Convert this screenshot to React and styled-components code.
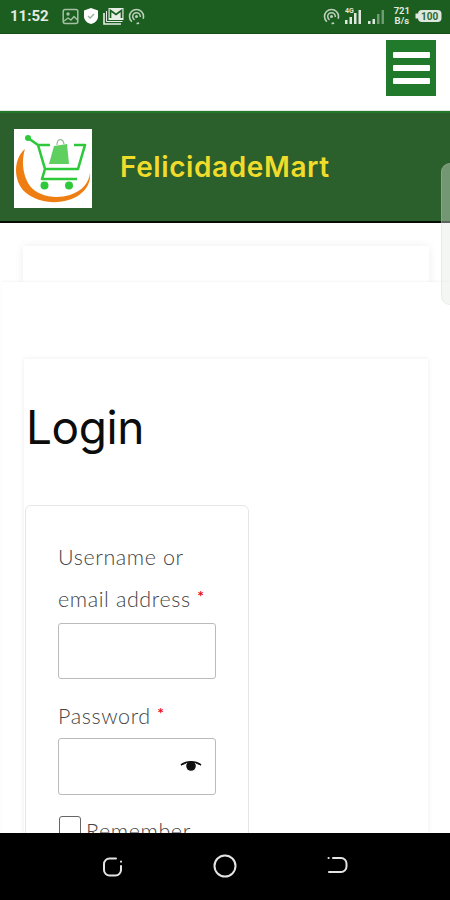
import React from 'react';
import styled, { createGlobalStyle } from 'styled-components';

const Global = createGlobalStyle`
  html, body {
    margin: 0;
    padding: 0;
    background: #fff;
  }
  * { box-sizing: border-box; }
`;

const Screen = styled.div`
  position: relative;
  width: 450px;
  height: 900px;
  overflow: hidden;
  background: #fff;
  font-family: Lato, "Open Sans", sans-serif;
`;

const StatusBar = styled.div`
  height: 34px;
  background: #1b5e20;
  border-bottom: 1px solid #14501a;
  display: flex;
  align-items: center;
  justify-content: space-between;
  padding: 0 8px 1px 10px;
  color: #fff;
`;

const StatusGroup = styled.div`
  display: flex;
  align-items: center;
  gap: ${p => p.$gap || 4}px;
`;

const Clock = styled.span`
  font: 700 15px Roboto, sans-serif;
  color: #e3ebe3;
  margin-right: 9px;
`;

const Speed = styled.span`
  font: 700 9.5px/10px Roboto, sans-serif;
  color: #dfe8df;
  text-align: center;
  margin: 0 4px 0 7px;
`;

const TopBar = styled.div`
  height: 77px;
  display: flex;
  justify-content: flex-end;
  padding: 6px 14px 0 0;
  background: #fff;
  border-bottom: 1px solid #e8e8e4;
`;

const MenuButton = styled.div`
  width: 50px;
  height: 56px;
  background: #217a2b;
  display: flex;
  flex-direction: column;
  align-items: center;
  justify-content: center;
  gap: 7px;
`;

const MenuBar = styled.span`
  width: 37px;
  height: 6px;
  border-radius: 1px;
  background: #fff;
`;

const Banner = styled.div`
  height: 112px;
  background: #2b5f2b;
  border-top: 2px solid #217a2b;
  border-bottom: 2px solid #060d06;
  display: flex;
  align-items: center;
  padding: 2px 0 0 14px;
`;

const LogoBox = styled.div`
  width: 78px;
  height: 79px;
  background: #fff;
  display: flex;
`;

const BrandName = styled.div`
  margin: 0 0 2px 28px;
  font: 600 28px Inter, "Open Sans", sans-serif;
  letter-spacing: 0.6px;
  color: #f0dc2a;
`;

const Content = styled.div`
  padding-top: 23px;
  background: #fff;
`;

const GhostCard = styled.div`
  height: 60px;
  margin: 0 21px 0 23px;
  background: #fff;
  box-shadow: 0 0 9px rgba(0, 0, 0, 0.07);
`;

const Sheet = styled.div`
  position: relative;
  margin: -24px 0 0 2px;
  padding-top: 77px;
  background: #fff;
  box-shadow: 0 -1px 3px rgba(0, 0, 0, 0.04);
`;

const InnerCard = styled.div`
  margin: 0 22px;
  padding: 1px 2px 0;
  background: #fff;
  box-shadow: 0 0 5px rgba(0, 0, 0, 0.08);
`;

const Heading = styled.h1`
  margin: 38px 0 49px;
  font: 400 46px/58px Inter, "Open Sans", sans-serif;
  letter-spacing: -0.4px;
  color: #0c0c0c;
`;

const FormCard = styled.form`
  width: 224px;
  margin-left: -1px;
  padding: 30px 32px 40px 32px;
  background: #fff;
  border: 1px solid #e6e6e6;
  border-radius: 6px;
`;

const Label = styled.label`
  display: block;
  margin-bottom: ${p => p.$mb}px;
  font: 300 21.5px/42px Lato, "Open Sans", sans-serif;
  letter-spacing: 0.6px;
  color: #444;
`;

const Required = styled.span`
  color: #e8101c;
  font-size: 16px;
  line-height: 0;
  font-weight: 700;
  vertical-align: 5px;
`;

const InputWrap = styled.div`
  position: relative;
  margin-bottom: ${p => p.$mb}px;
`;

const Input = styled.input`
  display: block;
  width: 158px;
  height: ${p => p.$h}px;
  background: #fff;
  border: 1px solid #bbb;
  border-radius: 3px;
  outline: none;
`;

const EyeIcon = styled.svg`
  position: absolute;
  right: 14px;
  top: 21px;
`;

const RememberRow = styled.div`
  display: flex;
  align-items: flex-start;
  margin-left: 1px;
`;

const Checkbox = styled.span`
  flex: none;
  width: 22px;
  height: 22px;
  border: 1px solid #666;
  border-radius: 3px;
  background: #fff;
`;

const RememberText = styled.span`
  margin-left: 5px;
  font: 300 21.5px/30px Lato, "Open Sans", sans-serif;
  letter-spacing: 0.6px;
  color: #444;
`;

const EdgeHandle = styled.div`
  position: absolute;
  top: 163px;
  right: 0;
  width: 9px;
  height: 142px;
  border-radius: 10px 0 0 10px;
  background: rgba(225, 232, 225, 0.4);
  border: 1px solid rgba(200, 205, 200, 0.25);
  border-right: none;
`;

const NavBar = styled.div`
  position: absolute;
  left: 0;
  right: 0;
  bottom: 0;
  height: 67px;
  background: #000;
  display: flex;
  align-items: center;
  justify-content: space-between;
  padding: 0 100px 2px 100px;
`;

const SmallIcon = ({ w = 18, h = 18, children }) => (
  <svg width={w} height={h} viewBox={`0 0 ${w} ${h}`} fill="none">{children}</svg>
);

const Arcs = () => (
  <SmallIcon w={17} h={17}>
    <circle cx="8.5" cy="8.5" r="7" stroke="#bcd0bc" strokeWidth="1.6" strokeDasharray="30 6" strokeDashoffset="-5" transform="rotate(90 8.5 8.5)" />
    <circle cx="8.5" cy="8.5" r="3.8" stroke="#bcd0bc" strokeWidth="1.5" strokeDasharray="16 8" strokeDashoffset="-2" transform="rotate(90 8.5 8.5)" />
    <circle cx="8.5" cy="8.5" r="1.5" fill="#bcd0bc" />
  </SmallIcon>
);

const StatusLeft = () => (
  <StatusGroup>
    <Clock>11:52</Clock>
    <SmallIcon w={17} h={17}>
      <rect x="1.2" y="1.5" width="14.6" height="14" rx="2" stroke="#a6c0a6" strokeWidth="1.5" />
      <circle cx="6" cy="6" r="1.7" fill="#a6c0a6" />
      <path d="M2 13l4-3 3 2 3-3.5 3.5 3.5" stroke="#a6c0a6" strokeWidth="1.4" />
    </SmallIcon>
    <SmallIcon w={16} h={18}>
      <path d="M8 1l7 2.5v6c0 3.8-3 6.4-7 7.5-4-1.1-7-3.7-7-7.5v-6z" fill="#fff" />
      <path d="M5 9l2.2 2L11 7" stroke="#9ab09a" strokeWidth="1.4" />
    </SmallIcon>
    <SmallIcon w={21} h={18}>
      <rect x="5.5" y="1" width="15" height="12" fill="#e6eee6" />
      <path d="M7.5 11V3.5l5.5 4 5.5-4V11" stroke="#1b5e20" strokeWidth="1.7" />
      <path d="M1 6v11h17" stroke="#e6eee6" strokeWidth="1.6" />
      <path d="M3.500 4v10.500h16" stroke="#e6eee6" strokeWidth="1" />
    </SmallIcon>
    <Arcs />
  </StatusGroup>
);

const StatusRight = () => (
  <StatusGroup $gap={1}>
    <Arcs />
    <SmallIcon w={24} h={20}>
      <text x="4" y="7" fontSize="7" fontWeight="700" fill="#dfe8df" fontFamily="Roboto, sans-serif">4G</text>
      <rect x="4" y="14" width="2.500" height="4" fill="#dfe8df" />
      <rect x="8.500" y="11" width="2.500" height="7" fill="#dfe8df" />
      <rect x="13" y="7" width="2.500" height="11" fill="#dfe8df" />
      <rect x="17.500" y="4" width="2.500" height="14" fill="#dfe8df" />
    </SmallIcon>
    <SmallIcon w={20} h={20}>
      <rect x="2" y="15" width="2.500" height="3" fill="#dfe8df" />
      <rect x="6.500" y="13" width="2.500" height="5" fill="#dfe8df" />
      <rect x="11" y="8" width="2.500" height="10" fill="#6f9a72" />
      <rect x="15.500" y="4" width="2.500" height="14" fill="#6f9a72" />
    </SmallIcon>
    <Speed>721<br />B/s</Speed>
    <SmallIcon w={27} h={14}>
      <rect x="0.500" y="4.500" width="2.500" height="5" fill="#dfe8df" />
      <rect x="3" y="1" width="23.500" height="12" rx="4" fill="#dfe8df" />
      <text x="14.700" y="10.500" textAnchor="middle" fontSize="10" fontWeight="700" fill="#2b6b30" fontFamily="Roboto, sans-serif">100</text>
    </SmallIcon>
  </StatusGroup>
);

const CartLogo = () => (
  <svg width="78" height="79" viewBox="0 0 78 79" fill="none">
    <path d="M11 20C-1 30-1 52 11 63c14 12 36 13 51 5 10-6 15-14 14-24-1 10-8 18-20 22-14 4-31 2-40-9C9 47 7 33 11 20z" fill="#ee7d12" />
    <path d="M14 9l10 7 7 24h33l7-24H60M24 16h12M31 40l-3 10h35" stroke="#2dc93a" strokeWidth="2.600" strokeLinejoin="round" />
    <circle cx="14" cy="9" r="3" fill="#2dc93a" />
    <circle cx="30.500" cy="56.500" r="4" fill="#2dc93a" />
    <circle cx="55" cy="56.500" r="4" fill="#2dc93a" />
    <path d="M40 17l13-2 2 20-20 0z" fill="#5fd05f" />
    <path d="M43 16c0-7 6-7 7-1" stroke="#9ab59a" strokeWidth="1.200" />
  </svg>
);

const Eye = () => (
  <EyeIcon width="22" height="14" viewBox="0 0 22 14" fill="none">
    <path d="M1 6C6 1.500 16 1.500 21 6" stroke="#111" strokeWidth="1.500" />
    <path d="M1 6c3-1 4-1.500 5-1.800M21 6c-3-1-4-1.500-5-1.800" stroke="#111" strokeWidth="1" />
    <circle cx="11" cy="7" r="4.800" fill="#111" />
  </EyeIcon>
);

const NavIcon = ({ children }) => (
  <svg width="26" height="26" viewBox="0 0 26 26" fill="none" stroke="#e4e4e4" strokeWidth="2" strokeLinecap="round">{children}</svg>
);

export default function App() {
  return (
    <Screen>
      <Global />
      <StatusBar>
        <StatusLeft />
        <StatusRight />
      </StatusBar>
      <TopBar>
        <MenuButton>
          <MenuBar />
          <MenuBar />
          <MenuBar />
        </MenuButton>
      </TopBar>
      <Banner>
        <LogoBox><CartLogo /></LogoBox>
        <BrandName>FelicidadeMart</BrandName>
      </Banner>
      <Content>
        <GhostCard />
        <Sheet>
          <InnerCard>
            <Heading>Login</Heading>
            <FormCard>
              <Label $mb={3}>Username or email address <Required>*</Required></Label>
              <InputWrap $mb={16}>
                <Input $h={56} />
              </InputWrap>
              <Label $mb={1}>Password <Required>*</Required></Label>
              <InputWrap $mb={21}>
                <Input $h={57} />
                <Eye />
              </InputWrap>
              <RememberRow>
                <Checkbox />
                <RememberText>Remember me</RememberText>
              </RememberRow>
            </FormCard>
          </InnerCard>
        </Sheet>
      </Content>
      <EdgeHandle />
      <NavBar>
        <NavIcon>
          <path d="M16 5.500H9.500C6.500 5.500 4 8 4 11v6c0 3 2.500 5.500 5.500 5.500h6c3 0 5.500-2.500 5.500-5.500v-4" />
          <path d="M21 8.500v.2" />
        </NavIcon>
        <NavIcon>
          <circle cx="13" cy="13" r="10.500" />
        </NavIcon>
        <NavIcon>
          <path d="M9 5h8c3 0 5.500 2.500 5.500 5.500v3c0 3-2.500 5.500-5.500 5.500H5" />
          <path d="M4.500 5h.2" />
        </NavIcon>
      </NavBar>
    </Screen>
  );
}
